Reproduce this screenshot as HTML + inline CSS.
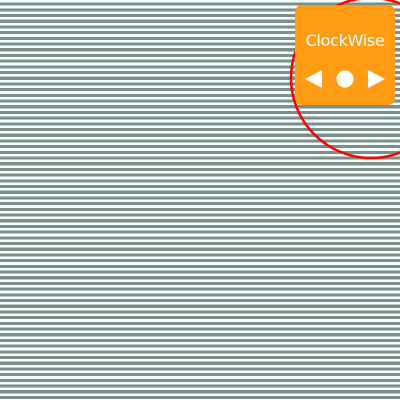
<!DOCTYPE html>
<html><head><style>
html,body{margin:0;padding:0;width:400px;height:400px;overflow:hidden}
body{background:repeating-linear-gradient(to bottom,#f0ffff 0,#f0ffff 2.6px,#7f8c87 2.6px,#7f8c87 5.7px)}
.box{position:absolute;left:295px;top:5px;width:100px;height:100px;background:#ff9c14;border-radius:7px}
.t{position:absolute;left:0;width:100px;top:26px;text-align:center;color:#fff;font:16px "DejaVu Sans",sans-serif;letter-spacing:-0.3px}
svg{position:absolute;left:0;top:0}
</style></head><body>
<svg width="400" height="400"><circle cx="371" cy="78" r="80" fill="none" stroke="#f00" stroke-width="2.5"/></svg>
<div class="box"><div class="t">ClockWise</div>
<svg width="100" height="100"><polygon points="10,74 27,65 27,83" fill="#fff"/><circle cx="50" cy="74" r="8.5" fill="#fff"/><polygon points="90,74 73,65 73,83" fill="#fff"/></svg>
</div>
</body></html>
